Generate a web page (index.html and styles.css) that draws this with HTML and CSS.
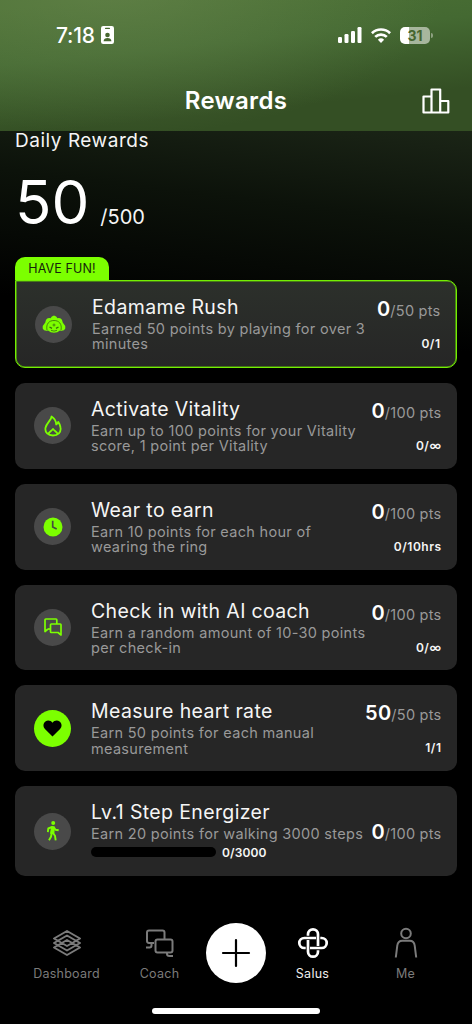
FILE: index.html
```html
<!DOCTYPE html>
<html lang="en">
<head>
<meta charset="utf-8">
<title>Rewards</title>
<link rel="stylesheet" href="styles.css">
</head>
<body>
<div class="screen">
  <header class="top">
    <div class="status">
      <div class="clock"><span class="time">7:18</span>
        <svg width="13" height="18" viewBox="0 0 13 18"><rect width="13" height="18" rx="2.2" fill="#fff"/><rect x="4" y="1.8" width="5" height="1.2" rx=".6" fill="#47672f"/><circle cx="6.5" cy="9" r="2.3" fill="#47672f"/><path d="M2.6 15.3c0-2.1 1.800-3.200 3.900-3.200s3.900 1.100 3.900 3.200z" fill="#47672f"/></svg>
      </div>
      <div class="signals">
        <svg width="24" height="16" viewBox="0 0 24 16" fill="#fff"><rect x="0" y="10" width="4" height="6" rx="1.2"/><rect x="6.5" y="7" width="4" height="9" rx="1.2"/><rect x="13" y="4" width="4" height="12" rx="1.2"/><rect x="19.5" y="0" width="4" height="16" rx="1.2"/></svg>
        <svg class="wifi" width="20" height="15" viewBox="0 0 20 15" fill="none" stroke="#fff" stroke-width="2.7"><path d="M.9 5.200a13 13 0 0 1 18.200 0M4.200 8.900a8.300 8.300 0 0 1 11.600 0"/><path d="M10 15l-3.100-3.300a4.600 4.600 0 0 1 6.200 0z" fill="#fff" stroke="none"/></svg>
        <div class="battery"><span>31</span></div>
      </div>
    </div>
    <div class="bar">
      <h1>Rewards</h1>
      <svg class="podium" width="28" height="26" viewBox="0 0 28 26" fill="none" stroke="#fff" stroke-width="2.2" stroke-linejoin="round"><path d="M1.500 8.500H9.500V24.500H1.500zM9.500 1.500h8.700v23H9.500zM18.200 13h8.100v11.500h-8.100z"/></svg>
    </div>
  </header>

  <main>
    <h2>Daily Rewards</h2>
    <div class="total"><span class="now">50</span><span class="max">/500</span></div>
    <div class="tag">HAVE FUN!</div>
    <div class="cards">
      <section class="card featured">
        <div class="badge"><svg width="24" height="18" viewBox="0 0 24 18"><path d="M12 .5Q14.500 1 15.500 3.200 20 2.500 20.700 7.500 23.800 10.500 23.300 13.500 22 16.500 18 15.500 15.500 17.800 12 17.800T6 15.500Q2 16.500.7 13.500.2 10.500 3.300 7.500 4 2.500 8.500 3.200 9.500 1 12 .5z" fill="#7cff00"/><g fill="none" stroke="#376c0d" stroke-width=".8"><path d="M5 15C3.800 9 7 5.500 12 5.500s8.200 3.500 7 9.500M9 15.300q3 1.600 6 0"/><circle cx="12" cy="10" r="1"/><path d="M7.500 12l2.500 1.300M16.500 12L14 13.300" stroke-width="1.400"/></g></svg></div>
        <div class="info"><h3>Edamame Rush</h3><p>Earned 50 points by playing for over 3<br>minutes</p></div>
        <div class="score"><div class="pts"><b>0</b>/50 pts</div><div class="count">0/1</div></div>
      </section>
      <section class="card">
        <div class="badge"><svg width="18" height="22" viewBox="0 0 18 22" fill="none" stroke="#7cff00" stroke-width="1.800" stroke-linejoin="round"><path d="M7.500 1.500c.3 3-5 6.400-6 11.300C.7 17.500 4.200 20.500 9 20.500s8.400-3.100 7.500-8c-.3-2.100-1.100-4-2.300-5.600-.3 1.400-.9 2.200-2 2.600C12.100 6 10.300 3.200 7.500 1.500z"/><path d="M4.500 19c.1-2 2.700-2.700 4.500-5 1.800 2.300 4.400 3 4.500 5"/></svg></div>
        <div class="info"><h3>Activate Vitality</h3><p>Earn up to 100 points for your Vitality<br>score, 1 point per Vitality</p></div>
        <div class="score"><div class="pts"><b>0</b>/100 pts</div><div class="count">0/∞</div></div>
      </section>
      <section class="card">
        <div class="badge"><svg width="20" height="20" viewBox="0 0 20 20"><circle cx="10" cy="10" r="9.500" fill="#7cff00"/><path d="M9.700 3.800V10l4 2" fill="none" stroke="#444b3f" stroke-width="1.700"/></svg></div>
        <div class="info"><h3>Wear to earn</h3><p>Earn 10 points for each hour of<br>wearing the ring</p></div>
        <div class="score"><div class="pts"><b>0</b>/100 pts</div><div class="count">0/10hrs</div></div>
      </section>
      <section class="card">
        <div class="badge"><svg width="18" height="18" viewBox="0 0 18 18" fill="none" stroke="#7cff00" stroke-width="1.700" stroke-linejoin="round"><path d="M4 11L1 13.500V1.800Q1 1 1.800 1H12q.800 0 .800.800V6"/><path d="M7.300 6h9q.700 0 .700.700V17l-3-2.500H7.300q-.800 0-.800-.800v-7q0-.7.800-.7z"/><path d="M4 11h2.500"/></svg></div>
        <div class="info"><h3>Check in with AI coach</h3><p>Earn a random amount of 10-30 points<br>per check-in</p></div>
        <div class="score"><div class="pts"><b>0</b>/100 pts</div><div class="count">0/∞</div></div>
      </section>
      <section class="card">
        <div class="badge lit"><svg width="19" height="17" viewBox="0 0 20 18"><path d="M10 17.500L2 9.500C-.5 7 .2 3 2.500 1.500 5 0 8.300.5 10 3c1.700-2.500 5-3 7.500-1.500C19.800 3 20.500 7 18 9.500z" fill="#000"/></svg></div>
        <div class="info"><h3>Measure heart rate</h3><p>Earn 50 points for each manual<br>measurement</p></div>
        <div class="score"><div class="pts"><b>50</b>/50 pts</div><div class="count">1/1</div></div>
      </section>
      <section class="card steps">
        <div class="badge"><svg width="12" height="20" viewBox="0 0 12 20" fill="none" stroke="#7cff00" stroke-linejoin="round"><circle cx="6.200" cy="2" r="2" fill="#7cff00" stroke="none"/><path d="M5 6l2 .2-.5 6L4 12z" fill="#7cff00" stroke-width="1.800"/><path d="M5 6L1.300 7.500.8 11M7 6.500l1.500 2.300 3.200.5M4.700 12l-.7 3.700-2 3.600M6 12l2 2.800.7 4.500" stroke-width="1.900"/></svg></div>
        <div class="info"><h3>Lv.1 Step Energizer</h3><p>Earn 20 points for walking 3000 steps</p><div class="progress"><i></i><span class="count">0/3000</span></div></div>
        <div class="score"><div class="pts"><b>0</b>/100 pts</div></div>
      </section>
    </div>
  </main>

  <nav>
    <a class="tab"><svg width="34" height="34" viewBox="0 0 34 34" fill="none" stroke="#7b7b7b" stroke-width="2" stroke-linejoin="round"><path d="M17 5l13 7.500L17 20 4 12.500zM17 9.500L30 17l-13 7.500L4 17zM17 14l13 7.500L17 29 4 21.500z"/></svg><span>Dashboard</span></a>
    <a class="tab"><svg width="34" height="34" viewBox="1 0 34 34" fill="none" stroke="#7b7b7b" stroke-width="2"><path d="M12 17H7q-2-.2-2-2V6.500Q5 4.500 7 4.500h13.500q2 0 2 2V13M9.500 17v2.500q0 2-2 2H4"/><path d="M15.500 13.500h13q2 0 2 2v9q0 2-2 2h-13q-2 0-2-2v-9q0-2 2-2zM25 26.500V28q0 2 2.500 2H31"/></svg><span>Coach</span></a>
    <a class="add"><svg width="30" height="30" viewBox="0 0 30 30" stroke="#000" stroke-width="2.200" stroke-linecap="round"><path d="M15 2v26M2 15h26"/></svg></a>
    <a class="tab active"><svg width="34" height="34" viewBox="0 0 34 34" fill="none" stroke="#fff" stroke-width="2.700">
      <path id="loop" d="M12 9.700V8.300a5 5 0 0 1 10 0V20"/><use href="#loop" transform="rotate(90 17 17)"/><use href="#loop" transform="rotate(180 17 17)"/><use href="#loop" transform="rotate(270 17 17)"/></svg><span>Salus</span></a>
    <a class="tab"><svg width="34" height="34" viewBox="0 0 34 34" fill="none" stroke="#7b7b7b" stroke-width="2"><circle cx="17" cy="7.500" r="4.800"/><path d="M6.800 31.500l1.500-12q.6-4.800 5-4.800h7.400q4.400 0 5 4.800l1.500 12"/></svg><span>Me</span></a>
  </nav>
  <div class="home"></div>
</div>
</body>
</html>
```
FILE: styles.css
```css
* { box-sizing: border-box; margin: 0; padding: 0; }
body { background: #000; font-family: Inter, "Liberation Sans", sans-serif; color: #f5f5f5; }
svg { display: block; flex: none; }
.screen {
  width: 472px; height: 1024px; overflow: hidden; display: flex; flex-direction: column;
  background: linear-gradient(187deg, #1c2717 120px, #182114 150px, #0c120a 225px, #000 350px) #000;
}
.top {
  height: 131px; flex: none;
  background: radial-gradient(ellipse 330px 150px at 115px -15px, rgba(112,141,85,.5), transparent), linear-gradient(174deg, #4b7034 10px, #446932 65px, #344f24 136px);
}
.status { height: 70px; display: flex; justify-content: space-between; padding: 0 39px 0 56px; align-items: center; }
.clock { display: flex; align-items: center; gap: 6px; color: #fff; }
.time { font-size: 21px; font-weight: 500; letter-spacing: -.2px; }
.signals { display: flex; align-items: center; }
.wifi { margin: 0 9px 0 9px; }
.battery {
  width: 30px; height: 17px; border-radius: 5px; position: relative; margin-right: 3px;
  background: linear-gradient(90deg, #fff 31%, #a7b69d 31%);
  color: #46652f; font-size: 14px; font-weight: 700; line-height: 17px; text-align: center;
}
.battery::after { content: ""; position: absolute; left: 31px; top: 6px; width: 2px; height: 5px; border-radius: 0 2px 2px 0; background: #8ea181; }
.bar { height: 61px; display: grid; grid-template-columns: 1fr auto 1fr; align-items: center; padding: 1px 22px 0 0; }
h1 { grid-column: 2; font-size: 24px; font-weight: 600; line-height: 30px; color: #fff; padding-left: 22px; letter-spacing: .3px; }
.podium { justify-self: end; }
main { padding: 0 15px; flex: none; }
h2 { font-size: 19px; font-weight: 400; line-height: 20px; letter-spacing: .53px; }
.total { display: flex; align-items: baseline; height: 106px; padding: 15px 0 0 0; line-height: 72px; }
.now { font-size: 60px; font-weight: 400; color: #fff; letter-spacing: 0; }
.max { font-size: 20px; font-weight: 400; margin-left: 11px; }
.tag { width: 94px; height: 23px; border-radius: 10px 10px 0 0; background: #7cff00; color: #15240a; font-size: 12.500px; line-height: 24px; text-align: center; letter-spacing: .1px; }
.cards { display: grid; gap: 15px; }
.card { display: flex; height: 85.800px; border-radius: 10px; background: #262626; padding: 0 15.500px 0 19px; }
.card.featured { height: 88px; background: linear-gradient(#2c302b, #262626); border: 1px solid #74ee02; box-shadow: inset 0 0 0 .6px #62c508; border-radius: 0 10px 10px 10px; }
.badge { width: 37px; height: 37px; border-radius: 50%; background: #494949; display: flex; align-items: center; justify-content: center; align-self: center; flex: none; }
.badge.lit { background: #7cff00; }
.info { margin-left: 20px; padding-top: 14px; flex: 1; white-space: nowrap; min-width: 0; }
h3 { font-size: 19.500px; font-weight: 430; line-height: 25px; letter-spacing: .36px; }
.info p { font-size: 14.500px; line-height: 15.300px; color: #999; letter-spacing: .31px; padding-top: 1px; }
.score { text-align: right; padding-top: 15px; white-space: nowrap; }
.pts { font-size: 14.500px; line-height: 26px; color: #999; letter-spacing: .25px; }
.pts b { font-size: 20px; font-weight: 600; color: #fff; }
.count { font-size: 12px; font-weight: 600; line-height: 16px; letter-spacing: .5px; }
.score .count { margin-top: 12px; }
.steps { height: 90px; }
.steps .score { padding-top: 33px; }
.progress { display: flex; align-items: center; gap: 6px; margin-top: 3px; }
.progress i { width: 125px; height: 10px; border-radius: 5px; background: #000; margin-bottom: 2px; }
.progress .count { letter-spacing: .1px; padding-top: 1px; }
nav { display: flex; padding: 46px 20px 0; height: 132px; margin-top: 1px; flex: none; }
.tab { width: 93px; display: flex; flex-direction: column; align-items: center; font-size: 12.500px; line-height: 16px; color: #7b7b7b; letter-spacing: .25px; padding-top: 3px; gap: 6px; }
.tab.active { color: #eee; }
.add { width: 60px; height: 60px; border-radius: 50%; background: #fff; display: flex; align-items: center; justify-content: center; }
.home { width: 168px; height: 6px; border-radius: 3px; background: #fff; margin: -1px auto 0; }
```
